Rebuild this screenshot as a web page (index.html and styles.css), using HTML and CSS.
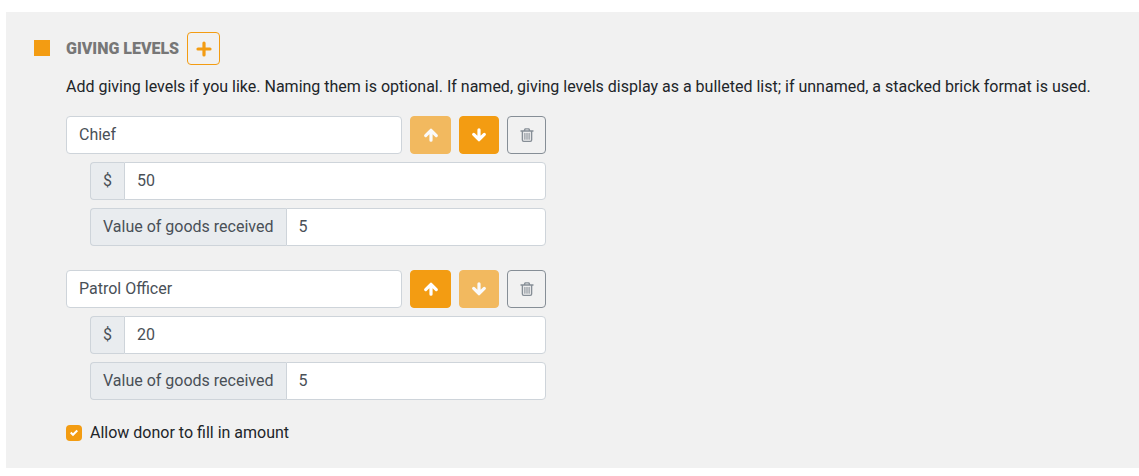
FILE: index.html
```
<!DOCTYPE html>
<html lang="en">
<head>
    <meta charset="UTF-8">
    <meta name="viewport" content="width=device-width, initial-scale=1.0">
    <title>Giving Levels</title>
    <link rel="stylesheet" href="styles.css">
</head>
<body>
    <!-- Shared icons -->
    <svg class="icon-defs" aria-hidden="true">
        <symbol id="plus" viewBox="0 0 16 16">
            <path d="M8 2v12M2 8h12" fill="none" stroke="currentColor" stroke-width="3.2" stroke-linecap="round"/>
        </symbol>
        <symbol id="arrow-up" viewBox="0 0 16 16">
            <path d="M8 13.2V4M2.7 8.6L8 3.3l5.3 5.3" fill="none" stroke="currentColor" stroke-width="3.2" stroke-linecap="round" stroke-linejoin="round"/>
        </symbol>
        <symbol id="arrow-down" viewBox="0 0 16 16">
            <path d="M8 2.8V12M2.7 7.4L8 12.7l5.3-5.3" fill="none" stroke="currentColor" stroke-width="3.2" stroke-linecap="round" stroke-linejoin="round"/>
        </symbol>
        <symbol id="trash" viewBox="0 0 14 16">
            <path d="M1 4h12M4.3 3.7L5 1.9h4l.7 1.8M2.4 4.2v8.9q0 1.3 1.3 1.3h6.6q1.3 0 1.3-1.3V4.2" fill="none" stroke="currentColor" stroke-width="1.4" stroke-linecap="round" stroke-linejoin="round"/>
            <path d="M4.9 6.2v6M7 6.2v6M9.1 6.2v6" fill="none" stroke="currentColor" stroke-width="1.1" stroke-linecap="round"/>
        </symbol>
    </svg>

    <form class="panel">
        <div class="bullet"></div>
        <div class="content">
            <div class="heading">
                <h2>Giving Levels</h2>
                <button type="button" class="btn btn-add" aria-label="Add giving level"><svg class="icon-plus"><use href="#plus"/></svg></button>
            </div>
            <p class="description">Add giving levels if you like. Naming them is optional. If named, giving levels display as a bulleted list; if unnamed, a stacked brick format is used.</p>

            <div class="levels">
                <div class="level">
                    <div class="level-name">
                        <input type="text" class="form-control" value="Chief" aria-label="Level name">
                        <button type="button" class="btn btn-move btn-up" disabled aria-label="Move up"><svg class="icon-arrow"><use href="#arrow-up"/></svg></button>
                        <button type="button" class="btn btn-move" aria-label="Move down"><svg class="icon-arrow"><use href="#arrow-down"/></svg></button>
                        <button type="button" class="btn btn-delete" aria-label="Delete"><svg class="icon-trash"><use href="#trash"/></svg></button>
                    </div>
                    <div class="input-group">
                        <label for="amount-1">$</label>
                        <input type="text" class="form-control" id="amount-1" value="50">
                    </div>
                    <div class="input-group">
                        <label for="goods-1">Value of goods received</label>
                        <input type="text" class="form-control" id="goods-1" value="5">
                    </div>
                </div>

                <div class="level">
                    <div class="level-name">
                        <input type="text" class="form-control" value="Patrol Officer" aria-label="Level name">
                        <button type="button" class="btn btn-move btn-up" aria-label="Move up"><svg class="icon-arrow"><use href="#arrow-up"/></svg></button>
                        <button type="button" class="btn btn-move" disabled aria-label="Move down"><svg class="icon-arrow"><use href="#arrow-down"/></svg></button>
                        <button type="button" class="btn btn-delete" aria-label="Delete"><svg class="icon-trash"><use href="#trash"/></svg></button>
                    </div>
                    <div class="input-group">
                        <label for="amount-2">$</label>
                        <input type="text" class="form-control" id="amount-2" value="20">
                    </div>
                    <div class="input-group">
                        <label for="goods-2">Value of goods received</label>
                        <input type="text" class="form-control" id="goods-2" value="5">
                    </div>
                </div>
            </div>

            <div class="check">
                <input type="checkbox" id="fill-in" checked>
                <label for="fill-in">Allow donor to fill in amount</label>
            </div>
        </div>
    </form>
</body>
</html>
```
FILE: styles.css
```
* {
    box-sizing: border-box;
}

body {
    margin: 0;
    padding: 12px 0 8px 6px;
    background-color: #fff;
    color: #212529;
    font-family: Roboto, "Liberation Sans", sans-serif;
    font-size: 16px;
    line-height: 24px;
}

.icon-defs {
    display: none;
}

.panel {
    display: flex;
    gap: 16px;
    padding: 20px 28px 23px;
    background-color: #f1f1f1;
}

.bullet {
    flex: none;
    width: 16px;
    height: 16px;
    margin-top: 8px;
    background-color: #f39c12;
}

.content {
    flex: 1;
    min-width: 0;
}

.heading {
    display: flex;
    align-items: center;
    gap: 8px;
}

.heading h2 {
    margin: 0;
    color: #777;
    font-size: 16px;
    font-weight: 900;
    text-transform: uppercase;
}

.description {
    margin: 10px 0 17px;
}

/* Buttons */
.btn {
    display: flex;
    flex: none;
    align-items: center;
    justify-content: center;
    padding: 0;
    border: 1px solid #f39c12;
    border-radius: 4px;
    cursor: pointer;
}

.btn-add {
    width: 33px;
    height: 33px;
    background-color: transparent;
    color: #f39c12;
}

.btn-move {
    width: 40px;
    background-color: #f39c12;
    color: #fff;
}

.btn-up {
    width: 41px;
}

.btn-move:disabled {
    opacity: 0.65;
    cursor: default;
}

.btn-delete {
    width: 39px;
    border-color: #868e96;
    background-color: transparent;
    color: #868e96;
}

.icon-plus,
.icon-arrow {
    width: 16px;
    height: 16px;
}

.icon-trash {
    width: 14px;
    height: 16px;
}

/* Levels */
.levels {
    display: flex;
    flex-direction: column;
    gap: 24px;
    max-width: 480px;
}

.level {
    display: flex;
    flex-direction: column;
    gap: 8px;
}

.level-name {
    display: flex;
    gap: 8px;
}

.form-control {
    flex: 1;
    min-width: 0;
    height: 38px;
    padding: 5px 12px 7px;
    border: 1px solid #ced4da;
    border-radius: 4px;
    background-color: #fff;
    color: #495057;
    font: inherit;
}

.input-group {
    display: flex;
    margin-left: 24px;
}

.input-group label {
    padding: 6px 12px;
    border: 1px solid #ced4da;
    border-right: 0;
    border-radius: 4px 0 0 4px;
    background-color: #e9ecef;
    color: #495057;
}

.input-group .form-control {
    border-radius: 0 4px 4px 0;
}

/* Checkbox */
.check {
    display: flex;
    align-items: center;
    gap: 8px;
    margin-top: 21px;
}

.check input {
    appearance: none;
    width: 16px;
    height: 16px;
    margin: 0;
    border-radius: 4px;
    background: #f39c12 url("data:image/svg+xml,%3Csvg xmlns='http://www.w3.org/2000/svg' viewBox='0 0 8 8'%3E%3Cpath fill='%23fff' d='M6.564.75l-3.59 3.612-1.538-1.55L0 4.26 2.974 7.25 8 2.193z'/%3E%3C/svg%3E") center / 8px no-repeat;
}
```
